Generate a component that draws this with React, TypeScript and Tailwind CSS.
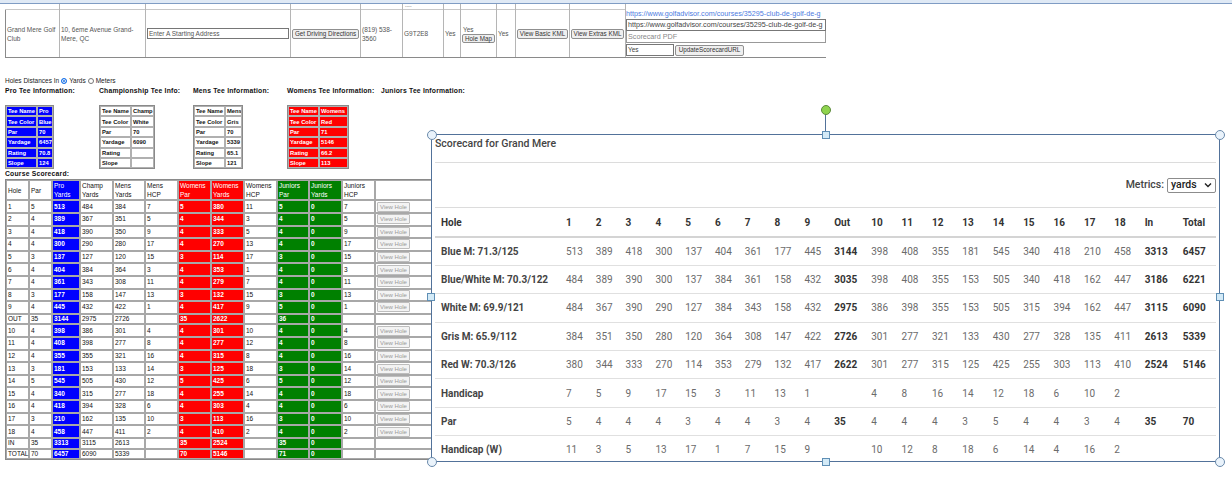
import React from "react";

type Tone = "w" | "b" | "r" | "g";

const toneCls: Record<Tone, string> = {
  w: "bg-white text-[#111]",
  b: "bg-[#0000ff] text-white font-bold",
  r: "bg-[#ff0000] text-white font-bold",
  g: "bg-[#008000] text-white font-bold",
};

const cols: { head: string[]; tone: Tone; w: string }[] = [
  { head: ["Hole"], tone: "w", w: "w-[23px]" },
  { head: ["Par"], tone: "w", w: "w-[23px]" },
  { head: ["Pro", "Yards"], tone: "b", w: "w-[28px]" },
  { head: ["Champ", "Yards"], tone: "w", w: "w-[33px]" },
  { head: ["Mens", "Yards"], tone: "w", w: "w-[32px]" },
  { head: ["Mens", "HCP"], tone: "w", w: "w-[33px]" },
  { head: ["Womens", "Par"], tone: "r", w: "w-[33px]" },
  { head: ["Womens", "Yards"], tone: "r", w: "w-[33px]" },
  { head: ["Womens", "HCP"], tone: "w", w: "w-[33px]" },
  { head: ["Juniors", "Par"], tone: "g", w: "w-[32px]" },
  { head: ["Juniors", "Yards"], tone: "g", w: "w-[33px]" },
  { head: ["Juniors", "HCP"], tone: "w", w: "w-[33px]" },
  { head: [""], tone: "w", w: "w-[70px]" },
];

const holes: (string | number)[][] = [
  [1, 5, 513, 484, 384, 7, 5, 380, 11, 5, 0, 7],
  [2, 4, 389, 367, 351, 5, 4, 344, 3, 4, 0, 5],
  [3, 4, 418, 390, 350, 9, 4, 333, 5, 4, 0, 9],
  [4, 4, 300, 290, 280, 17, 4, 270, 13, 4, 0, 17],
  [5, 3, 137, 127, 120, 15, 3, 114, 17, 3, 0, 15],
  [6, 4, 404, 384, 364, 3, 4, 353, 1, 4, 0, 3],
  [7, 4, 361, 343, 308, 11, 4, 279, 7, 4, 0, 11],
  [8, 3, 177, 158, 147, 13, 3, 132, 15, 3, 0, 13],
  [9, 4, 445, 432, 422, 1, 4, 417, 9, 5, 0, 1],
  ["OUT", 35, 3144, 2975, 2726, "", 35, 2622, "", 36, 0, ""],
  [10, 4, 398, 386, 301, 4, 4, 301, 10, 4, 0, 4],
  [11, 4, 408, 398, 277, 8, 4, 277, 12, 4, 0, 8],
  [12, 4, 355, 355, 321, 16, 4, 315, 8, 4, 0, 16],
  [13, 3, 181, 153, 133, 14, 3, 125, 18, 3, 0, 14],
  [14, 5, 545, 505, 430, 12, 5, 425, 6, 5, 0, 12],
  [15, 4, 340, 315, 277, 18, 4, 255, 14, 4, 0, 18],
  [16, 4, 418, 394, 328, 6, 4, 303, 4, 4, 0, 6],
  [17, 3, 210, 162, 135, 10, 3, 113, 16, 3, 0, 10],
  [18, 4, 458, 447, 411, 2, 4, 410, 2, 4, 0, 2],
  ["IN", 35, 3313, 3115, 2613, "", 35, 2524, "", 35, 0, ""],
  ["TOTAL", 70, 6457, 6090, 5339, "", 70, 5146, "", 71, 0, ""],
];

const teeBoxes: { label: string; tone: Tone; w: string; rows: string[][] }[] = [
  {
    label: "Pro Tee Information:",
    tone: "b",
    w: "w-[49px]",
    rows: [["Tee Name", "Pro"], ["Tee Color", "Blue"], ["Par", "70"], ["Yardage", "6457"], ["Rating", "70.8"], ["Slope", "124"]],
  },
  {
    label: "Championship Tee Info:",
    tone: "w",
    w: "w-[56px]",
    rows: [["Tee Name", "Champ"], ["Tee Color", "White"], ["Par", "70"], ["Yardage", "6090"], ["Rating", ""], ["Slope", ""]],
  },
  {
    label: "Mens Tee Information:",
    tone: "w",
    w: "w-[50px]",
    rows: [["Tee Name", "Mens"], ["Tee Color", "Gris"], ["Par", "70"], ["Yardage", "5339"], ["Rating", "65.1"], ["Slope", "121"]],
  },
  {
    label: "Womens Tee Information:",
    tone: "r",
    w: "w-[62px]",
    rows: [["Tee Name", "Womens"], ["Tee Color", "Red"], ["Par", "71"], ["Yardage", "5146"], ["Rating", "66.2"], ["Slope", "113"]],
  },
];

// overlay scorecard
type Row = { name: string; front: (string | number)[]; out: string | number; back: (string | number)[]; inn: string | number; total: string | number };

const cardRows: Row[] = [
  { name: "Blue M: 71.3/125", front: [513, 389, 418, 300, 137, 404, 361, 177, 445], out: 3144, back: [398, 408, 355, 181, 545, 340, 418, 210, 458], inn: 3313, total: 6457 },
  { name: "Blue/White M: 70.3/122", front: [484, 389, 390, 300, 137, 384, 361, 158, 432], out: 3035, back: [398, 408, 355, 153, 505, 340, 418, 162, 447], inn: 3186, total: 6221 },
  { name: "White M: 69.9/121", front: [484, 367, 390, 290, 127, 384, 343, 158, 432], out: 2975, back: [386, 398, 355, 153, 505, 315, 394, 162, 447], inn: 3115, total: 6090 },
  { name: "Gris M: 65.9/112", front: [384, 351, 350, 280, 120, 364, 308, 147, 422], out: 2726, back: [301, 277, 321, 133, 430, 277, 328, 135, 411], inn: 2613, total: 5339 },
  { name: "Red W: 70.3/126", front: [380, 344, 333, 270, 114, 353, 279, 132, 417], out: 2622, back: [301, 277, 315, 125, 425, 255, 303, 113, 410], inn: 2524, total: 5146 },
  { name: "Handicap", front: [7, 5, 9, 17, 15, 3, 11, 13, 1], out: "", back: [4, 8, 16, 14, 12, 18, 6, 10, 2], inn: "", total: "" },
  { name: "Par", front: [5, 4, 4, 4, 3, 4, 4, 3, 4], out: 35, back: [4, 4, 4, 3, 5, 4, 4, 3, 4], inn: 35, total: 70 },
  { name: "Handicap (W)", front: [11, 3, 5, 13, 17, 1, 7, 15, 9], out: "", back: [10, 12, 8, 18, 6, 14, 4, 16, 2], inn: "", total: "" },
];

function Btn({ children, className = "" }: { children: React.ReactNode; className?: string }) {
  return (
    <button className={`whitespace-nowrap rounded-[2px] border border-[#8f8f8f] bg-[#efefef] px-0 text-[6.3px] leading-[8px] text-[#333] ${className}`}>
      {children}
    </button>
  );
}

function TopCell({ w, children, className = "" }: { w: string; children?: React.ReactNode; className?: string }) {
  return (
    <div className={`flex ${w} flex-col border-r border-[#b5b5b5]`}>
      <div className="h-[6px] border-b border-[#c8c8c8]" />
      <div className={`flex flex-1 items-center px-[1px] ${className}`}>{children}</div>
    </div>
  );
}

function TopBar() {
  return (
    <div className="ml-[5px] flex h-[54px] w-[821px] border-b border-[#8a8a8a] text-[6.5px] leading-[9px] text-[#555]">
      <div className="flex w-[55px] flex-col border-r border-[#b5b5b5]">
        <div className="h-[6px] border-b border-[#c8c8c8]" />
        <div className="flex flex-1 items-center border-l border-[#8a8a8a] px-[1px]">Grand Mere Golf Club</div>
      </div>
      <TopCell w="w-[86px]">10, 6eme Avenue Grand-Mere, QC</TopCell>
      <TopCell w="w-[145px]">
        <div className="h-[11px] w-[143px] border border-[#767676] px-[1px] leading-[9px] text-[#555]">Enter A Starting Address</div>
      </TopCell>
      <TopCell w="w-[70px]">
        <Btn className="h-[10px] w-[68px]">Get Driving Directions</Btn>
      </TopCell>
      <TopCell w="w-[42px]">(819) 538-3560</TopCell>
      <div className="flex w-[41px] flex-col border-r border-[#b5b5b5]">
        <div className="flex h-[6px] items-start border-b border-[#c8c8c8] pl-[2px] text-[5px] leading-[4px] text-[#777]">
          <span>----</span>
        </div>
        <div className="flex flex-1 items-center px-[1px]">G9T2E8</div>
      </div>
      <TopCell w="w-[17px]">Yes</TopCell>
      <TopCell w="w-[36px]" className="flex-col items-start justify-center">
        <span className="ml-[1px]">Yes</span>
        <Btn className="h-[9px] w-[33px]">Hole Map</Btn>
      </TopCell>
      <TopCell w="w-[19px]">Yes</TopCell>
      <TopCell w="w-[54px]">
        <Btn className="h-[10px] w-[51px]">View Basic KML</Btn>
      </TopCell>
      <TopCell w="w-[56px]">
        <Btn className="h-[10px] w-[53px]">View Extras KML</Btn>
      </TopCell>
      <div className="flex w-[200px] flex-col overflow-hidden pt-[5px] text-[7.2px]">
        <div className="h-[10px] overflow-hidden whitespace-nowrap leading-[10px] text-[#4d7be0]">https://www.golfadvisor.com/courses/35295-club-de-golf-de-g</div>
        <div className="h-[12px] overflow-hidden whitespace-nowrap border border-[#777] px-[1px] leading-[10px] text-[#444]">https://www.golfadvisor.com/courses/35295-club-de-golf-de-g</div>
        <div className="h-[12px] border-x border-b border-[#999] px-[1px] leading-[11px] text-[#888]">Scorecard PDF</div>
        <div className="mt-[1px] flex h-[12px] items-center gap-[1px] text-[6.5px]">
          <div className="h-[12px] w-[48px] border border-[#777] px-[1px] leading-[10px] text-[#444]">Yes</div>
          <Btn className="h-[11px] w-[69px]">UpdateScorecardURL</Btn>
        </div>
      </div>
    </div>
  );
}

function TeeInfo() {
  return (
    <div className="ml-[5px] mt-[1px] flex">
      {teeBoxes.map((box) => (
        <div key={box.label} className="flex w-[94px] flex-col">
          <div className="text-[6.8px] font-bold leading-[9px] tracking-[0.2px] text-[#111]">{box.label}</div>
          <table className={`mt-[10px] ${box.w} table-fixed border-separate border-spacing-0 border border-[#8a8a8a] text-[5.8px] font-bold`}>
            <colgroup>
              <col className="w-[31px]" />
              <col />
            </colgroup>
            <tbody>
              {box.rows.map((r) => (
                <tr key={r[0]}>
                  {r.map((c, i) => (
                    <td key={i} className={`h-[10.4px] overflow-hidden whitespace-nowrap border border-[#b0b0b0] pl-[1px] leading-[8px] ${toneCls[box.tone]}`}>
                      {c}
                    </td>
                  ))}
                </tr>
              ))}
            </tbody>
          </table>
        </div>
      ))}
      <div className="text-[6.8px] font-bold leading-[9px] tracking-[0.2px] text-[#111]">Juniors Tee Information:</div>
    </div>
  );
}

function CourseTable() {
  return (
    <table className="mt-[1px] ml-[5px] w-[441px] table-fixed border-separate border-spacing-0 border border-[#8a8a8a] text-[6.5px] leading-[8px]">
      <colgroup>
        {cols.map((c, i) => (
          <col key={i} className={c.w} />
        ))}
      </colgroup>
      <thead>
        <tr>
          {cols.map((c, i) => (
            <th key={i} className={`h-[20px] border border-[#a8a8a8] px-[1px] text-left font-normal ${toneCls[c.tone]} ${c.tone !== "w" ? "font-bold" : ""}`}>
              {c.head.map((h) => (
                <div key={h} className="leading-[9px]">{h}</div>
              ))}
            </th>
          ))}
        </tr>
      </thead>
      <tbody>
        {holes.map((row) => {
          const isHole = typeof row[0] === "number";
          return (
            <tr key={String(row[0])}>
              {row.map((v, i) => (
                <td
                  key={i}
                  className={`${isHole ? "h-[12.6px]" : "h-[10.8px]"} border border-[#a8a8a8] px-[1px] text-left ${toneCls[cols[i].tone]}`}
                >
                  {v}
                </td>
              ))}
              <td className="border border-[#a8a8a8] bg-white pl-[1px]">
                {isHole && (
                  <button className="block h-[10px] w-[33px] whitespace-nowrap rounded-[1px] border border-[#bdbdbd] bg-[#f3f3f3] text-[6px] leading-[8px] text-[#999]">
                    View Hole
                  </button>
                )}
              </td>
            </tr>
          );
        })}
      </tbody>
    </table>
  );
}

function Handle({ className }: { className: string }) {
  return <span className={`absolute block ${className}`} />;
}

function ScorecardOverlay() {
  const numCell = "pl-[6px] text-left text-[#6b6b6b]";
  const boldCell = "pl-[6px] text-left font-bold text-[#333]";
  return (
    <div className="absolute left-[431px] top-[134px] h-[328px] w-[789px] font-['Roboto',sans-serif]">
      <div className="h-full w-full overflow-hidden border border-[#52729a] bg-white px-[3px]">
        <div className="h-[28px] border-b border-[#dcdcdc] pt-[3px] text-[10.5px] font-medium leading-[12px] text-[#444]">
          Scorecard for Grand Mere
        </div>
        <div className="flex h-[45px] items-center justify-end gap-[3px] border-b border-[#dcdcdc] text-[10.5px] font-medium text-[#444]">
          <span>Metrics:</span>
          <div className="flex h-[15px] w-[49px] items-center justify-between rounded-[2px] border border-[#8c8c8c] pl-[3px] pr-[3px] text-[#222]">
            <span className="leading-[12px]">yards</span>
            <svg width="8" height="6" viewBox="0 0 8 6" fill="none" stroke="#222" strokeWidth="1.4">
              <path d="M1 1.5l3 3 3-3" />
            </svg>
          </div>
        </div>
        <table className="w-full table-fixed border-collapse text-[10px]">
          <colgroup>
            <col className="w-[125px]" />
            {Array.from({ length: 9 }).map((_, i) => (
              <col key={`f${i}`} className="w-[29.8px]" />
            ))}
            <col className="w-[37px]" />
            {Array.from({ length: 9 }).map((_, i) => (
              <col key={`b${i}`} className="w-[30.4px]" />
            ))}
            <col className="w-[38px]" />
            <col />
          </colgroup>
          <thead>
            <tr className="h-[29px] border-b-2 border-[#d4d4d4]">
              <th className={boldCell}>Hole</th>
              {[1, 2, 3, 4, 5, 6, 7, 8, 9].map((n) => (
                <th key={n} className={boldCell}>{n}</th>
              ))}
              <th className={boldCell}>Out</th>
              {[10, 11, 12, 13, 14, 15, 16, 17, 18].map((n) => (
                <th key={n} className={boldCell}>{n}</th>
              ))}
              <th className={boldCell}>In</th>
              <th className={boldCell}>Total</th>
            </tr>
          </thead>
          <tbody>
            {cardRows.map((r) => (
              <tr key={r.name} className="h-[28.4px] border-b border-[#e0e0e0]">
                <td className="pl-[6px] text-left font-bold text-[#444]">{r.name}</td>
                {r.front.map((v, i) => (
                  <td key={`f${i}`} className={numCell}>{v}</td>
                ))}
                <td className={boldCell}>{r.out}</td>
                {r.back.map((v, i) => (
                  <td key={`b${i}`} className={numCell}>{v}</td>
                ))}
                <td className={boldCell}>{r.inn}</td>
                <td className={boldCell}>{r.total}</td>
              </tr>
            ))}
          </tbody>
        </table>
      </div>
      {/* selection handles */}
      <Handle className="left-[394px] top-[-21px] h-[18px] w-px bg-[#52729a]" />
      <Handle className="left-[389.5px] top-[-29.5px] h-[10px] w-[10px] rounded-full border border-[#5c8a3c] bg-[#8fd44e]" />
      <Handle className="left-[-4.5px] top-[-4.5px] h-[10px] w-[10px] rounded-full border border-[#6a8aab] bg-[#eaf3fb]" />
      <Handle className="right-[-5px] top-[-4.5px] h-[10px] w-[10px] rounded-full border border-[#6a8aab] bg-[#eaf3fb]" />
      <Handle className="bottom-[-5px] left-[-4.5px] h-[10px] w-[10px] rounded-full border border-[#6a8aab] bg-[#eaf3fb]" />
      <Handle className="bottom-[-5px] right-[-5px] h-[10px] w-[10px] rounded-full border border-[#6a8aab] bg-[#eaf3fb]" />
      <Handle className="left-[390.5px] top-[-3.5px] h-[8px] w-[8px] border border-[#5f8fb5] bg-[#d3eaf7]" />
      <Handle className="bottom-[-4px] left-[390.5px] h-[8px] w-[8px] border border-[#5f8fb5] bg-[#d3eaf7]" />
      <Handle className="left-[-4px] top-[159px] h-[8px] w-[8px] border border-[#5f8fb5] bg-[#d3eaf7]" />
      <Handle className="right-[-4px] top-[159px] h-[8px] w-[8px] border border-[#5f8fb5] bg-[#d3eaf7]" />
    </div>
  );
}

export default function App() {
  return (
    <div className="relative h-[480px] w-[1232px] overflow-hidden bg-white font-['Liberation_Sans',Arial,sans-serif]">
      <div className="h-[4px] border-b border-[#7f9cc4] bg-[#dfe9f5]" />
      <TopBar />
      <div className="ml-[5px] mt-[18px] flex items-center gap-[2px] text-[6.5px] leading-[9px] text-[#222]">
        <span>Holes Distances In</span>
        <span className="inline-block h-[6px] w-[6px] rounded-full border border-[#1a73e8] bg-[#1a73e8] shadow-[inset_0_0_0_1px_white]" />
        <span>Yards</span>
        <span className="inline-block h-[6px] w-[6px] rounded-full border border-[#777] bg-white" />
        <span>Meters</span>
      </div>
      <TeeInfo />
      <div className="ml-[5px] mt-[0px] text-[6.8px] font-bold leading-[9px] tracking-[0.2px] text-[#111]">Course Scorecard:</div>
      <CourseTable />
      <ScorecardOverlay />
    </div>
  );
}
